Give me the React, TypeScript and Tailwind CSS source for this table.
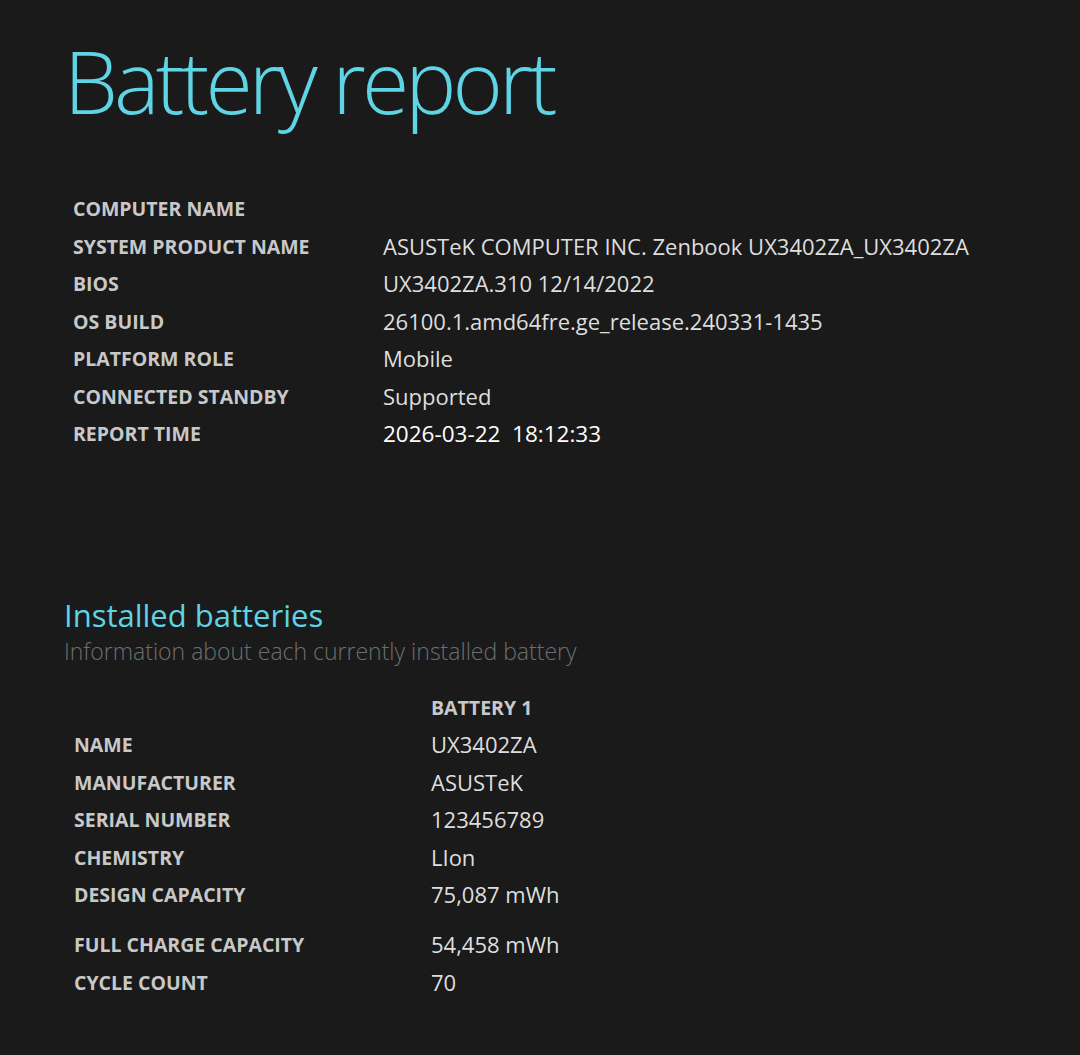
const systemRows = [
  { label: 'COMPUTER NAME', value: '' },
  { label: 'SYSTEM PRODUCT NAME', value: 'ASUSTeK COMPUTER INC. Zenbook UX3402ZA_UX3402ZA' },
  { label: 'BIOS', value: 'UX3402ZA.310 12/14/2022' },
  { label: 'OS BUILD', value: '26100.1.amd64fre.ge_release.240331-1435' },
  { label: 'PLATFORM ROLE', value: 'Mobile' },
  { label: 'CONNECTED STANDBY', value: 'Supported' },
];

const batteryRows = [
  { label: 'NAME', value: 'UX3402ZA' },
  { label: 'MANUFACTURER', value: 'ASUSTeK' },
  { label: 'SERIAL NUMBER', value: '123456789' },
  { label: 'CHEMISTRY', value: 'LIon' },
  { label: 'DESIGN CAPACITY', value: '75,087 mWh' },
];

const batteryRows2 = [
  { label: 'FULL CHARGE CAPACITY', value: '54,458 mWh' },
  { label: 'CYCLE COUNT', value: '70' },
];

function Row({ label, value, valueCol, bright }: { label: string; value: string; valueCol: string; bright?: boolean }) {
  return (
    <div className="flex items-center h-[37.5px]">
      <div className={`${valueCol} shrink-0 text-[19.5px] font-bold text-[#c8c8c8]`}>{label}</div>
      <div className={`whitespace-pre ${bright ? 'text-[22.5px] text-white' : 'text-[22px] text-[#dedede]'}`}>{value}</div>
    </div>
  );
}

export default function App() {
  return (
    <div
      className="min-h-screen bg-[#1a1a1a] pl-[64px] pt-[26px]"
      style={{ fontFamily: '"Open Sans", "Noto Sans", sans-serif' }}
    >
      {/* Title */}
      <h1 className="text-[86px] leading-[110px] text-[#5fd4e4] font-light tracking-[-3.9px]">Battery report</h1>

      {/* System info */}
      <div className="mt-[54px] pl-[9px]">
        {systemRows.map((r) => (
          <Row key={r.label} label={r.label} value={r.value} valueCol="w-[310px]" />
        ))}
        <Row label="REPORT TIME" value="2026-03-22  18:12:33" valueCol="w-[310px]" bright />
      </div>

      {/* Installed batteries */}
      <div className="mt-[144px]">
        <h2 className="text-[31px] leading-[36px] text-[#5fd4e4]">Installed batteries</h2>
        <p className="text-[23px] leading-[36px] font-light text-[#6e6e6e]">
          Information about each currently installed battery
        </p>
      </div>

      <div className="mt-[20px] pl-[10px]">
        <div className="flex items-center h-[37.5px]">
          <div className="w-[357px] shrink-0" />
          <div className="text-[19.5px] font-bold text-[#c8c8c8]">BATTERY 1</div>
        </div>
        {batteryRows.map((r) => (
          <Row key={r.label} label={r.label} value={r.value} valueCol="w-[357px]" />
        ))}
        <div className="h-[12.5px]" />
        {batteryRows2.map((r) => (
          <Row key={r.label} label={r.label} value={r.value} valueCol="w-[357px]" />
        ))}
      </div>
    </div>
  );
}
